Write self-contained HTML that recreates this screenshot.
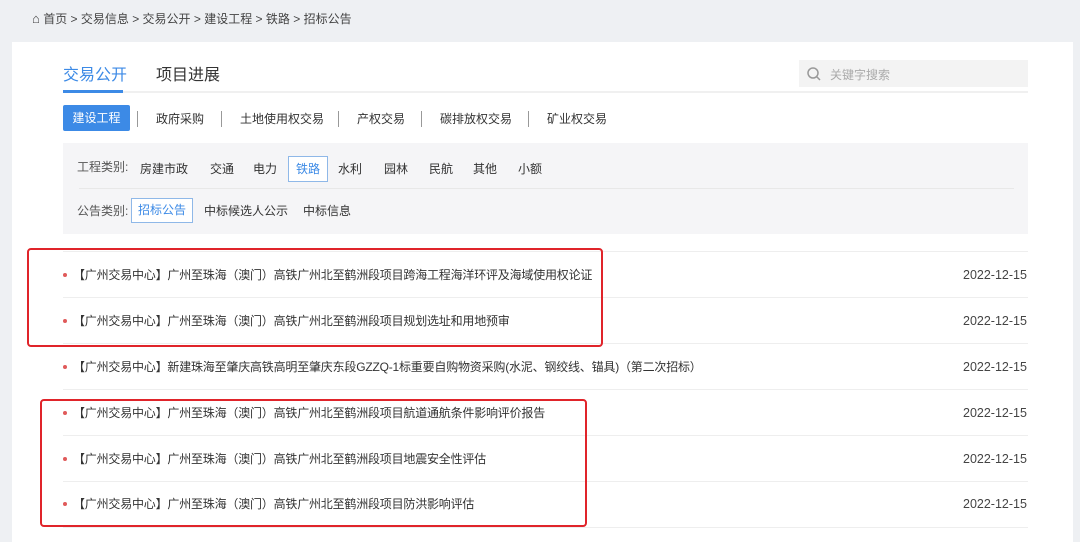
<!DOCTYPE html>
<html><head><meta charset="utf-8"><style>
*{margin:0;padding:0;box-sizing:border-box}
body{width:1080px;height:530px;overflow:hidden;background:#eef0f3;font-family:"Liberation Sans","Noto Sans CJK SC",sans-serif;position:relative;color:#333}
.a{position:absolute;white-space:nowrap}
.bc{left:32px;top:10px;font-size:12px;color:#444}
.card{left:12px;top:42px;width:1061px;height:500px;background:#fff}
.t{font-size:12px;line-height:14px}
.l{letter-spacing:-0.2px}
.sep{position:absolute;width:1px;height:16px;background:#999;top:111px}
.dot{width:4px;height:4px;border-radius:2px;background:#e05a5a}
.hl{height:1px;background:#eee;left:63px;width:965px}
.box{border:2px solid #e0242a;border-radius:4px}
.d{font-size:12.5px;line-height:14px;color:#444}
</style></head><body>
<div class="a bc"><span style="font-size:13px">⌂</span> 首页 &gt; 交易信息 &gt; 交易公开 &gt; 建设工程 &gt; 铁路 &gt; 招标公告</div>
<div class="a card"></div>
<div class="a" style="left:63px;top:61px;font-size:16px;color:#3c8ae6">交易公开</div>
<div class="a" style="left:156px;top:61px;font-size:16px;color:#333">项目进展</div>
<div class="a" style="left:63px;top:91px;width:965px;height:2px;background:#f0f0f0"></div>
<div class="a" style="left:63px;top:90px;width:60px;height:3px;background:#3c8ae6"></div>
<div class="a" style="left:799px;top:60px;width:229px;height:27px;background:#f3f3f3"></div>
<svg class="a" style="left:806px;top:66px" width="16" height="16" viewBox="0 0 16 16"><circle cx="7" cy="7" r="5" fill="none" stroke="#999" stroke-width="1.5"/><path d="M10.5 10.5L14 14" stroke="#999" stroke-width="1.5"/></svg>
<div class="a t" style="left:830px;top:68px;color:#aaa">关键字搜索</div>
<div class="a t" style="left:63px;top:105px;width:67px;height:26px;background:#3c8ae6;color:#fff;text-align:center;line-height:26px;border-radius:2px">建设工程</div>
<div class="sep" style="left:137px"></div><div class="sep" style="left:221px"></div><div class="sep" style="left:338px"></div><div class="sep" style="left:421px"></div><div class="sep" style="left:528px"></div>
<div class="a t" style="left:156px;top:112px">政府采购</div>
<div class="a t" style="left:240px;top:112px">土地使用权交易</div>
<div class="a t" style="left:357px;top:112px">产权交易</div>
<div class="a t" style="left:440px;top:112px">碳排放权交易</div>
<div class="a t" style="left:547px;top:112px">矿业权交易</div>
<div class="a" style="left:63px;top:143px;width:965px;height:91px;background:#f5f5f7"></div>
<div class="a" style="left:79px;top:188px;width:935px;height:1px;background:#e8e8e8"></div>
<div class="a t" style="left:77px;top:160px;color:#555">工程类别:</div>
<div class="a t" style="left:140px;top:162px">房建市政</div>
<div class="a t" style="left:210px;top:162px">交通</div>
<div class="a t" style="left:253px;top:162px">电力</div>
<div class="a t" style="left:288px;top:156px;width:40px;height:26px;border:1px solid #8fb8e8;background:#fff;color:#3c8ae6;text-align:center;line-height:24px">铁路</div>
<div class="a t" style="left:338px;top:162px">水利</div>
<div class="a t" style="left:384px;top:162px">园林</div>
<div class="a t" style="left:429px;top:162px">民航</div>
<div class="a t" style="left:473px;top:162px">其他</div>
<div class="a t" style="left:518px;top:162px">小额</div>
<div class="a t" style="left:77px;top:204px;color:#555">公告类别:</div>
<div class="a t" style="left:131px;top:198px;width:62px;height:25px;border:1px solid #8fb8e8;background:#fff;color:#3c8ae6;text-align:center;line-height:23px">招标公告</div>
<div class="a t" style="left:204px;top:204px">中标候选人公示</div>
<div class="a t" style="left:303px;top:204px">中标信息</div>
<div class="a hl" style="top:251px"></div>
<div class="a hl" style="top:297px"></div>
<div class="a hl" style="top:343px"></div>
<div class="a hl" style="top:389px"></div>
<div class="a hl" style="top:435px"></div>
<div class="a hl" style="top:481px"></div>
<div class="a hl" style="top:527px"></div>
<div class="a dot" style="left:63px;top:273px"></div><div class="a t l" style="left:73px;top:268px">【广州交易中心】广州至珠海（澳门）高铁广州北至鹤洲段项目跨海工程海洋环评及海域使用权论证</div><div class="a d" style="left:963px;top:268px">2022-12-15</div>
<div class="a dot" style="left:63px;top:319px"></div><div class="a t l" style="left:73px;top:314px">【广州交易中心】广州至珠海（澳门）高铁广州北至鹤洲段项目规划选址和用地预审</div><div class="a d" style="left:963px;top:314px">2022-12-15</div>
<div class="a dot" style="left:63px;top:365px"></div><div class="a t l" style="left:73px;top:360px">【广州交易中心】新建珠海至肇庆高铁高明至肇庆东段GZZQ-1标重要自购物资采购(水泥、钢绞线、锚具)（第二次招标）</div><div class="a d" style="left:963px;top:360px">2022-12-15</div>
<div class="a dot" style="left:63px;top:411px"></div><div class="a t l" style="left:73px;top:406px">【广州交易中心】广州至珠海（澳门）高铁广州北至鹤洲段项目航道通航条件影响评价报告</div><div class="a d" style="left:963px;top:406px">2022-12-15</div>
<div class="a dot" style="left:63px;top:457px"></div><div class="a t l" style="left:73px;top:452px">【广州交易中心】广州至珠海（澳门）高铁广州北至鹤洲段项目地震安全性评估</div><div class="a d" style="left:963px;top:452px">2022-12-15</div>
<div class="a dot" style="left:63px;top:502px"></div><div class="a t l" style="left:73px;top:497px">【广州交易中心】广州至珠海（澳门）高铁广州北至鹤洲段项目防洪影响评估</div><div class="a d" style="left:963px;top:497px">2022-12-15</div>
<div class="a box" style="left:27px;top:248px;width:576px;height:99px"></div>
<div class="a box" style="left:40px;top:399px;width:547px;height:128px"></div>
</body></html>
